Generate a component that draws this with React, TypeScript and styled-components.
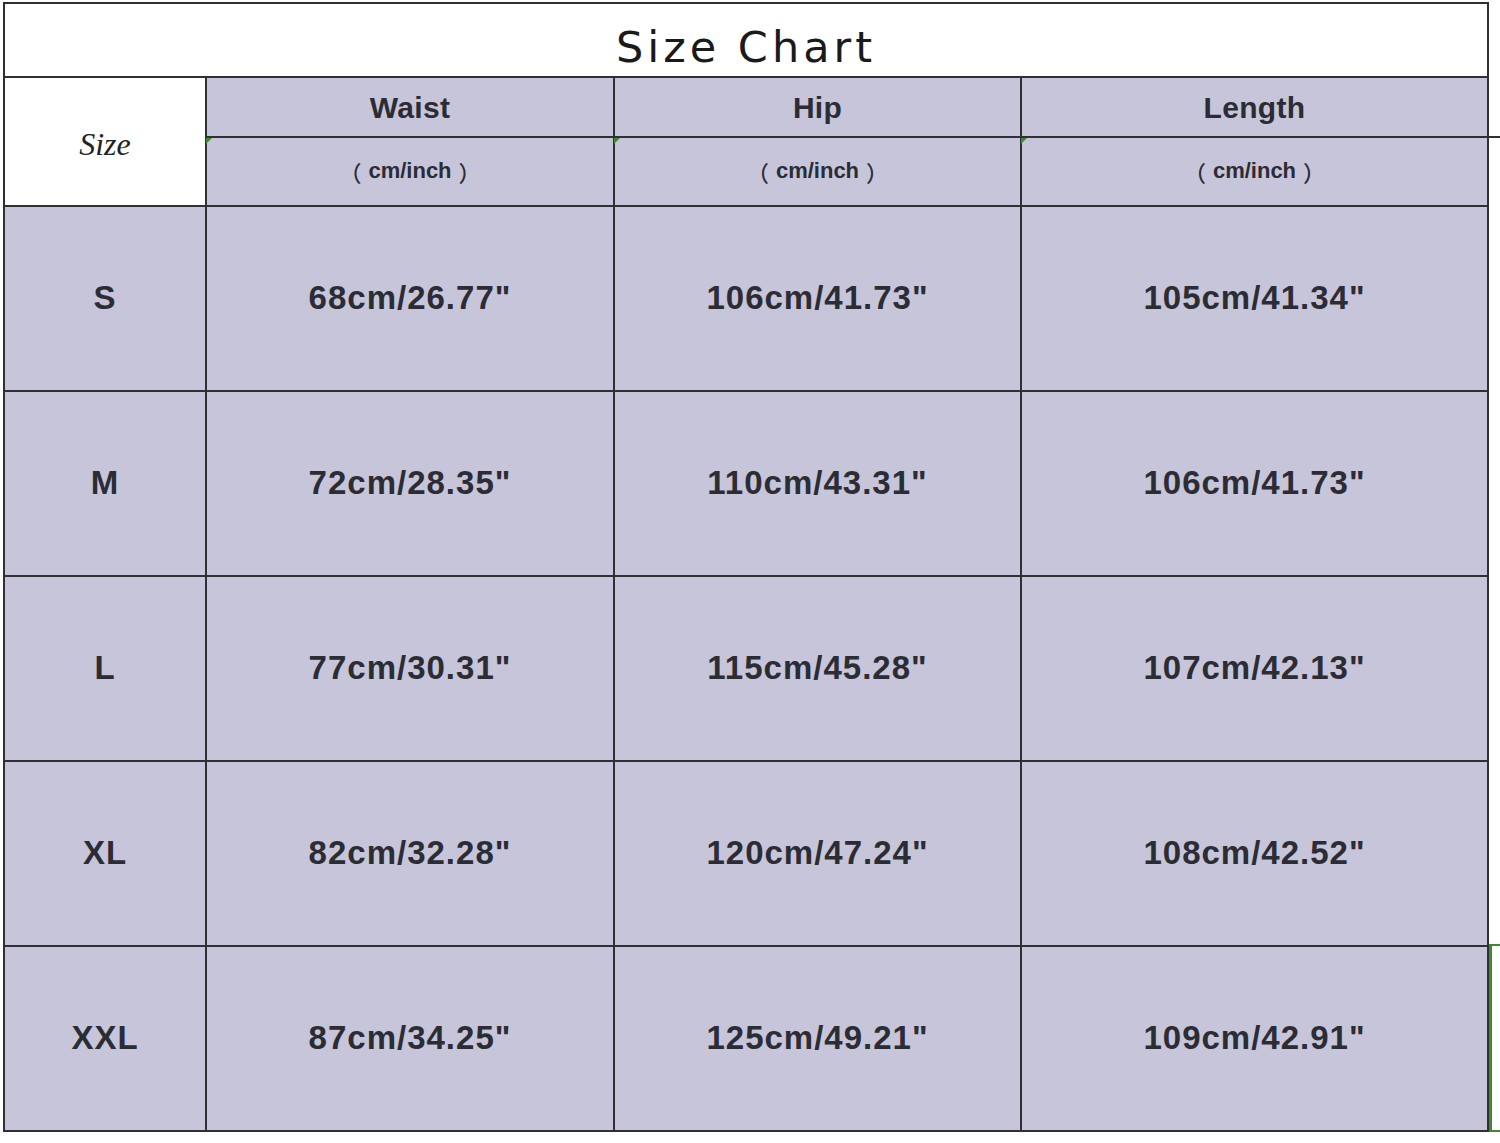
import styled, { createGlobalStyle } from "styled-components";

const Line = "#2f2f35";
const Lavender = "#c6c5da";
const Ink = "#2c2c34";
const Marker = "#3f8a2a";

interface SizeRow {
  size: string;
  waist: string;
  hip: string;
  length: string;
}

const rows: SizeRow[] = [
  { size: "S", waist: '68cm/26.77"', hip: '106cm/41.73"', length: '105cm/41.34"' },
  { size: "M", waist: '72cm/28.35"', hip: '110cm/43.31"', length: '106cm/41.73"' },
  { size: "L", waist: '77cm/30.31"', hip: '115cm/45.28"', length: '107cm/42.13"' },
  { size: "XL", waist: '82cm/32.28"', hip: '120cm/47.24"', length: '108cm/42.52"' },
  { size: "XXL", waist: '87cm/34.25"', hip: '125cm/49.21"', length: '109cm/42.91"' },
];

const measures = ["Waist", "Hip", "Length"];

export default function App() {
  return (
    <>
      <GlobalStyle />
      <S.Table>
        <S.Title>Size Chart</S.Title>
        <S.SizeLabel>Size</S.SizeLabel>
        {measures.map((m, i) => (
          <S.HeadCell key={m} $last={i === measures.length - 1}>
            {m}
          </S.HeadCell>
        ))}
        {measures.map((m, i) => (
          <S.UnitCell key={m} $last={i === measures.length - 1}>
            <S.Paren $open>（</S.Paren>
            cm/inch
            <S.Paren>）</S.Paren>
          </S.UnitCell>
        ))}
        {rows.map((r, ri) => (
          <S.Row key={r.size}>
            <S.DataCell>{r.size}</S.DataCell>
            <S.DataCell>{r.waist}</S.DataCell>
            <S.DataCell>{r.hip}</S.DataCell>
            <S.DataCell $selected={ri === rows.length - 1}>{r.length}</S.DataCell>
          </S.Row>
        ))}
      </S.Table>
    </>
  );
}

const GlobalStyle = createGlobalStyle`
  html, body {
    margin: 0;
    background: #ffffff;
  }

  body {
    width: 1500px;
    height: 1143px;
    overflow: hidden;
    font-family: "Liberation Sans", Arial, sans-serif;
  }
`;

const Cell = styled.div`
  display: flex;
  align-items: center;
  justify-content: center;
  position: relative;

  box-sizing: border-box;
  border-right: 2px solid ${Line};
  border-bottom: 2px solid ${Line};

  background: ${Lavender};
  color: ${Ink};
  font-weight: 700;
`;

const S = {
  Table: styled.div`
    display: grid;
    grid-template-columns: 202px 408px 407px 467px;
    grid-template-rows: 74px 60px 69px repeat(5, 185px);

    width: 1486px;
    margin: 2px 0 0 3px;

    box-sizing: border-box;
    border-top: 2px solid ${Line};
    border-left: 2px solid ${Line};
  `,

  Title: styled(Cell)`
    grid-column: 1 / -1;
    padding-top: 14px;

    background: #ffffff;
    color: #1a1a1a;
    font-family: "DejaVu Sans", sans-serif;
    font-weight: 400;
    font-size: 43px;
    letter-spacing: 4px;
  `,

  SizeLabel: styled(Cell)`
    grid-row: span 2;
    padding-top: 6px;

    background: #ffffff;
    font-family: "Liberation Serif", serif;
    font-style: italic;
    font-weight: 400;
    font-size: 32px;
    color: #222;
  `,

  HeadCell: styled(Cell)<{ $last?: boolean }>`
    padding-top: 2px;
    font-size: 30px;
    letter-spacing: 0.3px;

    ${({ $last }) =>
      $last &&
      `
      &::after {
        content: "";
        position: absolute;
        right: -14px;
        bottom: -2px;
        width: 12px;
        height: 1px;
        background: ${Line};
      }
    `}
  `,

  UnitCell: styled(Cell)<{ $last?: boolean }>`
    padding-bottom: 2px;
    font-size: 22px;

    &::before {
      content: "";
      position: absolute;
      left: -1px;
      top: 0;
      border-top: 6px solid ${Marker};
      border-right: 6px solid transparent;
    }

    ${({ $last }) =>
      $last &&
      `
      &::after {
        content: "";
        position: absolute;
        right: -14px;
        top: -2px;
        width: 12px;
        height: 1px;
        background: ${Line};
      }
    `}
  `,

  Paren: styled.span<{ $open?: boolean }>`
    font-family: "Noto Sans CJK SC", sans-serif;
    font-weight: 500;
    font-size: 22px;
    ${({ $open }) => ($open ? "padding-right: 7px;" : "padding-left: 7px;")}
  `,

  Row: styled.div`
    display: contents;
  `,

  DataCell: styled(Cell)<{ $selected?: boolean }>`
    padding-bottom: 2px;
    font-size: 33px;
    letter-spacing: 1px;

    ${({ $selected }) =>
      $selected &&
      `
      &::after {
        content: "";
        position: absolute;
        top: -3px;
        right: -14px;
        bottom: -2px;
        width: 12px;
        box-sizing: border-box;
        border-left: 3px solid ${Marker};
        border-top: 2px solid ${Marker};
        border-bottom: 2px solid ${Marker};
      }
    `}
  `,
};
